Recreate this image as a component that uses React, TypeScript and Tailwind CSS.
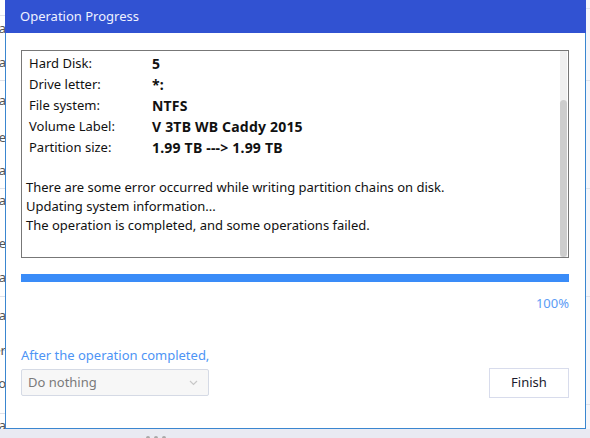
import React from "react";

const font = { fontFamily: '"Noto Sans", "Open Sans", sans-serif' };

const leftLetters = [
  { t: "Data", top: 20 },
  { t: "Data", top: 54 },
  { t: "Data", top: 92 },
  { t: "Free", top: 129 },
  { t: "Data", top: 162 },
  { t: "Data", top: 192 },
  { t: "Free", top: 235 },
  { t: "Data", top: 269 },
  { t: "Data", top: 307 },
  { t: "Other", top: 342 },
  { t: "Info", top: 375 },
  { t: "Data", top: 417 },
];

const rows: [string, string][] = [
  ["Hard Disk:", "5"],
  ["Drive letter:", "*:"],
  ["File system:", "NTFS"],
  ["Volume Label:", "V 3TB WB Caddy 2015"],
  ["Partition size:", "1.99 TB ---> 1.99 TB"],
];

export default function App() {
  return (
    <div className="w-[590px] h-[438px] bg-[#eef0f6] flex flex-col overflow-hidden" style={font}>
      <div className="flex h-[429px]">
        {/* left strip of background page */}
        <div className="w-[5px] relative overflow-hidden bg-white">
          <div className="absolute left-0 top-[15px] w-[5px] h-px bg-[#dfe2ea]" />
          <div className="absolute left-0 top-[80px] w-[5px] h-px bg-[#dfe2ea]" />
          <div className="absolute left-0 top-[188px] w-[5px] h-px bg-[#dfe2ea]" />
          <div className="absolute left-0 top-[296px] w-[5px] h-px bg-[#dfe2ea]" />
          <div className="absolute left-0 top-[350px] w-[5px] h-px bg-[#dfe2ea]" />
          <div className="absolute left-0 top-[413px] w-[5px] h-px bg-[#dfe2ea]" />
          {leftLetters.map((l, i) => (
            <div
              key={i}
              className="absolute right-[-1px] text-[13px] leading-[16px] text-[#555] whitespace-nowrap"
              style={{ top: l.top }}
            >
              {l.t}
            </div>
          ))}
        </div>

        {/* dialog */}
        <div className="w-[581px] flex flex-col">
          <div className="h-[33px] bg-[#3152d2] flex items-center pl-[15px] text-[13px] text-[#eef1ff]">
            Operation Progress
          </div>
          <div className="flex-1 bg-white border-l border-r border-b border-[#3a86d0] pl-[15px] pr-[16px] pt-[17px] flex flex-col">
            {/* log box */}
            <div className="h-[208px] border border-[#777777] flex">
              <div className="flex-1 pt-[2px] text-[13px] text-[#111]">
                {rows.map(([k, v]) => (
                  <div key={k} className="flex h-[21px] items-center pl-[7px]">
                    <div className="w-[123px]">{k}</div>
                    <div className="font-bold text-[14px] tracking-[0.2px]">{v}</div>
                  </div>
                ))}
                <div className="h-[20px]" />
                <div className="pl-[4px] leading-[19px]">
                  <div>There are some error occurred while writing partition chains on disk.</div>
                  <div>Updating system information...</div>
                  <div>The operation is completed, and some operations failed.</div>
                </div>
              </div>
              <div className="w-[7px] mr-[1px] bg-[#f0f0f0] flex flex-col">
                <div className="h-[49px]" />
                <div className="flex-1 bg-[#cdcdcd] rounded-[4px]" />
              </div>
            </div>

            {/* progress */}
            <div className="mt-[16px] h-[8px] bg-[#3a8cf8]" />
            <div className="mt-[13px] text-right text-[13px] leading-[17px] text-[#5b9cf5]">100%</div>

            <div className="mt-[35px] text-[13px] leading-[17px] text-[#4d94f5]">After the operation completed,</div>

            <div className="mt-[4px] flex items-end justify-between">
              <div className="w-[188px] h-[27px] mb-[2px] bg-[#f7f7f7] border border-[#d5dae5] rounded-[2px] flex items-center justify-between pl-[6px] pr-[10px]">
                <span className="text-[13px] text-[#7a7a7a]">Do nothing</span>
                <svg width="9" height="6" viewBox="0 0 9 6" fill="none">
                  <path d="M1 1l3.5 3.5L8 1" stroke="#c8c8c8" strokeWidth="1.2" />
                </svg>
              </div>
              <div className="w-[80px] h-[30px] border border-[#d8dcec] flex items-center justify-center text-[13px] text-[#1a1a2e]">
                Finish
              </div>
            </div>
          </div>
        </div>

        {/* right strip of background page */}
        <div className="flex-1 relative bg-[#f5f6fa]">
          <div className="absolute left-0 right-0 top-[8px] h-px bg-[#dfe2ea]" />
          <div className="absolute left-0 right-0 top-[80px] h-px bg-[#dfe2ea]" />
          <div className="absolute left-0 right-0 top-[188px] h-px bg-[#dfe2ea]" />
          <div className="absolute left-0 right-0 top-[296px] h-px bg-[#dfe2ea]" />
          <div className="absolute left-0 right-0 top-[404px] h-px bg-[#dfe2ea]" />
        </div>
      </div>

      {/* bottom strip */}
      <div className="flex-1 bg-[#e9eaf2] flex justify-center items-end pr-[278px]">
        <div className="flex gap-[4px] mb-[-2px]">
          <div className="w-[4px] h-[4px] rounded-full bg-[#a8a8a8]" />
          <div className="w-[4px] h-[4px] rounded-full bg-[#a8a8a8]" />
          <div className="w-[4px] h-[4px] rounded-full bg-[#a8a8a8]" />
        </div>
      </div>
    </div>
  );
}
